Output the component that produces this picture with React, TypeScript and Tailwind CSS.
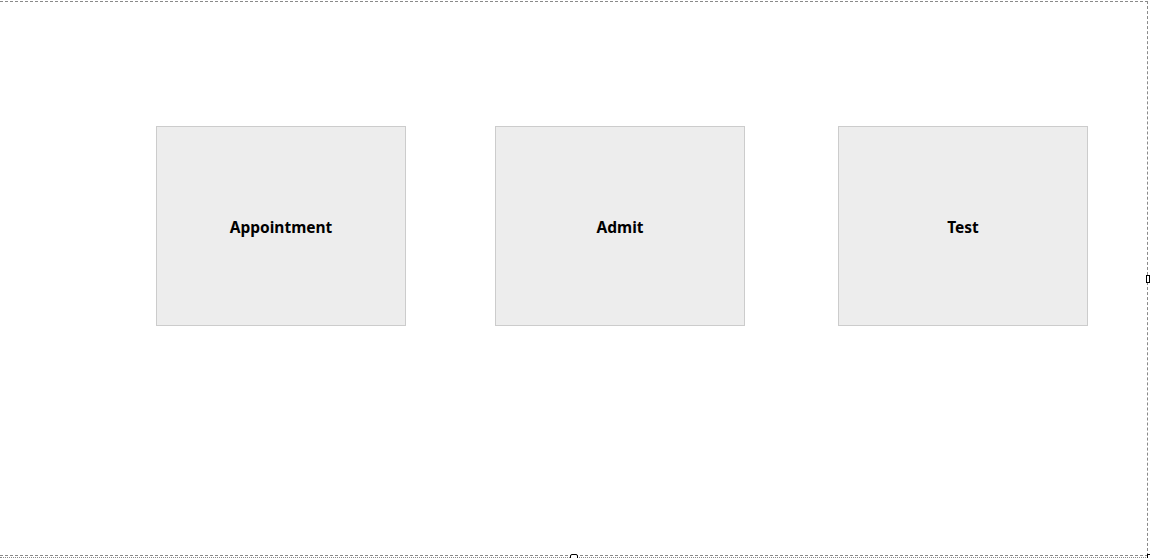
export default function App() {
  const cards = ['Appointment', 'Admit', 'Test']

  return (
    <div className="w-[1150px] h-[558px] bg-white overflow-hidden font-['Noto_Sans',sans-serif]">
      <div className="relative mt-px w-[1148px] h-[555px] border-t border-r border-b border-dashed border-[#8a8a8a]">
        <div className="flex pl-[156px] pt-[124px]">
          {cards.map((name, i) => (
            <div
              key={name}
              className={`w-[250px] h-[200px] bg-[#ededed] border border-[#cccccc] flex items-center justify-center pt-[4px] ${
                i === 1 ? 'ml-[89px]' : i === 2 ? 'ml-[93px]' : ''
              }`}
            >
              <span className="text-[15.5px] font-bold text-black">{name}</span>
            </div>
          ))}
        </div>

        {/* second dotted edge at the bottom */}
        <div className="absolute left-0 -bottom-[3px] w-[1148px] border-b border-dotted border-[#8a8a8a]" />

        {/* resize handles */}
        <div className="absolute -right-[3px] top-[273px] w-[4px] h-[8px] bg-white border border-black" />
        <div className="absolute left-[570px] -bottom-[4px] w-[8px] h-[5px] bg-white border border-black rounded-t-[2px]" />
        <div className="absolute -right-[3px] -bottom-[4px] w-[3px] h-[5px] border-l border-t border-black" />
      </div>
    </div>
  )
}
